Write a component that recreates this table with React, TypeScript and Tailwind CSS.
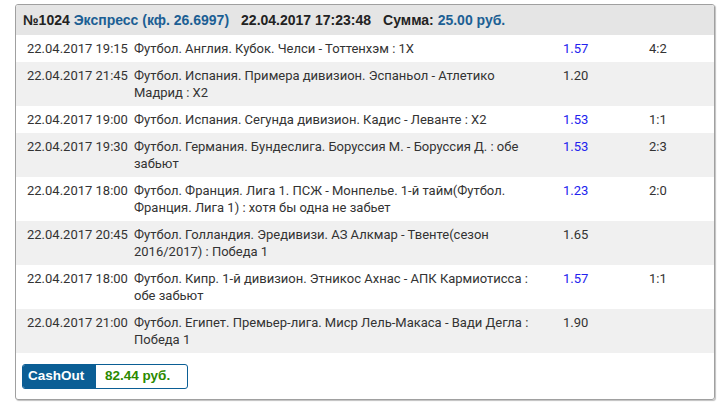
import { memo } from 'react';

type BetRow = {
  date: string;
  event: string;
  coef: string;
  score?: string;
  won?: boolean;
};

const ROWS: BetRow[] = [
  { date: '22.04.2017 19:15', event: 'Футбол. Англия. Кубок. Челси - Тоттенхэм : 1X', coef: '1.57', score: '4:2', won: true },
  { date: '22.04.2017 21:45', event: 'Футбол. Испания. Примера дивизион. Эспаньол - Атлетико Мадрид : X2', coef: '1.20' },
  { date: '22.04.2017 19:00', event: 'Футбол. Испания. Сегунда дивизион. Кадис - Леванте : X2', coef: '1.53', score: '1:1', won: true },
  { date: '22.04.2017 19:30', event: 'Футбол. Германия. Бундеслига. Боруссия М. - Боруссия Д. : обе забьют', coef: '1.53', score: '2:3', won: true },
  { date: '22.04.2017 18:00', event: 'Футбол. Франция. Лига 1. ПСЖ - Монпелье. 1-й тайм(Футбол. Франция. Лига 1) : хотя бы одна не забьет', coef: '1.23', score: '2:0', won: true },
  { date: '22.04.2017 20:45', event: 'Футбол. Голландия. Эредивизи. АЗ Алкмар - Твенте(сезон 2016/2017) : Победа 1', coef: '1.65' },
  { date: '22.04.2017 18:00', event: 'Футбол. Кипр. 1-й дивизион. Этникос Ахнас - АПК Кармиотисса : обе забьют', coef: '1.57', score: '1:1', won: true },
  { date: '22.04.2017 21:00', event: 'Футбол. Египет. Премьер-лига. Миср Лель-Макаса - Вади Дегла : Победа 1', coef: '1.90' },
];

const BetLine = memo(function BetLine({ row, odd }: { row: BetRow; odd: boolean }) {
  return (
    <div
      className={`grid grid-cols-[107px_429px_86px_1fr] pl-[11px] py-[5px] leading-[17px] ${
        odd ? 'bg-[#f0f0f0]' : 'bg-white'
      }`}
    >
      <div>{row.date}</div>
      <div className="pr-[22px]">{row.event}</div>
      <div className={row.won ? 'text-[#2222ee]' : ''}>{row.coef}</div>
      <div>{row.score ?? ''}</div>
    </div>
  );
});

export default function App() {
  return (
    <div
      className="bg-white w-[723px] h-[406px] pt-[4px] pl-[15px] text-[13px] text-[#333]"
      style={{ fontFamily: 'Roboto, "Liberation Sans", sans-serif' }}
    >
      <div className="w-[700px] border border-[#a0a0a0] rounded-[3px] shadow-[1px_1px_1px_rgba(0,0,0,0.25)] overflow-hidden">
        <div className="h-[30px] flex items-center pl-[7px] bg-[#e5e5e5] font-bold text-[14px] text-[#222] leading-[17px] font-['Liberation_Sans',Arial,sans-serif]">
          <span>
            №1024 <span className="text-[#1c5f94]">Экспресс (кф. 26.6997)</span>
          </span>
          <span className="ml-[12px]">22.04.2017 17:23:48</span>
          <span className="ml-[12px]">
            Сумма: <span className="text-[#1c5f94]">25.00 руб.</span>
          </span>
        </div>

        {ROWS.map((row, i) => (
          <BetLine key={i} row={row} odd={i % 2 === 1} />
        ))}

        <div className="pt-[11px] pb-[10px] pl-[6px]">
          <div className="inline-flex h-[25px] w-[166px] border border-[#0b5e95] rounded-[3px] overflow-hidden font-bold text-[13.5px] font-['Liberation_Sans',Arial,sans-serif]">
            <div className="w-[73px] bg-[#0b5e95] text-white flex items-center pl-[5px]">CashOut</div>
            <div className="flex-1 flex items-center pl-[9px] text-[#2b8a00]">82.44 руб.</div>
          </div>
        </div>
      </div>
    </div>
  );
}
